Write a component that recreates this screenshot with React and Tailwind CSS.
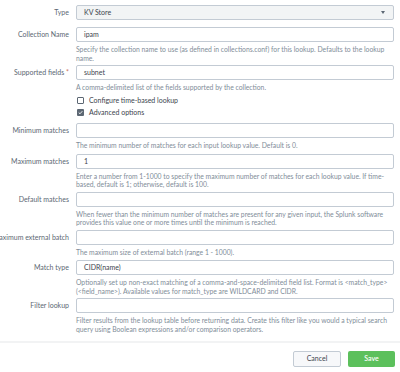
const labelCls = 'w-[69px] shrink-0 text-right whitespace-nowrap text-[7px] leading-[15px] text-[#5c6773]'

function Field({ label, required, value, help, twoLines, select }) {
  const gap = !help ? 'mb-[7px]' : twoLines ? 'mb-[3px]' : 'mb-[4px]'
  return (
    <div className={`flex gap-[7px] ${gap}`}>
      <div className={labelCls} style={{ direction: 'rtl' }}>
        <span style={{ direction: 'ltr', unicodeBidi: 'isolate' }}>
          {label}
          {required && <span className="text-[#c9735f]"> *</span>}
        </span>
      </div>
      <div className="flex-1 min-w-0">
        <div
          className={`h-[15px] rounded-[2px] border border-[#c3cbd4] flex items-center px-[7px] text-[7px] text-[#3c444d] ${
            select ? 'bg-[#f2f4f5]' : 'bg-white'
          }`}
        >
          <span className="flex-1">{value}</span>
          {select && (
            <svg width="4" height="3" viewBox="0 0 4 3" className="mr-[1px]">
              <path d="M0 0 L4 0 L2 3 Z" fill="#5c6773" />
            </svg>
          )}
        </div>
        {help && (
          <div className="mt-[3px] whitespace-nowrap text-[6.8px] leading-[8.5px] text-[#818d99]">{help}</div>
        )}
      </div>
    </div>
  )
}

function Check({ checked, label }) {
  return (
    <div className="flex items-center gap-[5px] ml-[77px] h-[12px] text-[7px] text-[#3c444d]">
      <span
        className={`w-[7px] h-[7px] rounded-[1px] flex items-center justify-center ${
          checked ? 'bg-[#5c6773]' : 'border border-[#5c6773] bg-white'
        }`}
      >
        {checked && (
          <svg width="5" height="5" viewBox="0 0 10 10">
            <path d="M1.5 5.2 L4 7.6 L8.6 2.4" stroke="white" strokeWidth="1.8" fill="none" />
          </svg>
        )}
      </span>
      {label}
    </div>
  )
}

export default function App() {
  return (
    <div className="w-[400px] h-[372px] bg-white overflow-hidden" style={{ fontFamily: 'Lato, "Open Sans", sans-serif' }}>
      <div className="pt-[5px] pr-[6px]">
        <Field label="Type" value="KV Store" select />
        <Field
          label="Collection Name"
          value="ipam"
          twoLines
          help={<>Specify the collection name to use (as defined in collections.conf) for this lookup. Defaults to the lookup<br />name.</>}
        />
        <Field
          label="Supported fields"
          required
          value="subnet"
          help="A comma-delimited list of the fields supported by the collection."
        />
        <div className="-mt-[1px] mb-[4.5px]">
          <Check label="Configure time-based lookup" />
          <Check checked label="Advanced options" />
        </div>
        <Field
          label="Minimum matches"
          value=""
          help="The minimum number of matches for each input lookup value. Default is 0."
        />
        <Field
          label="Maximum matches"
          value="1"
          twoLines
          help={<>Enter a number from 1-1000 to specify the maximum number of matches for each lookup value. If time-<br />based, default is 1; otherwise, default is 100.</>}
        />
        <Field
          label="Default matches"
          value=""
          twoLines
          help={<>When fewer than the minimum number of matches are present for any given input, the Splunk software<br />provides this value one or more times until the minimum is reached.</>}
        />
        <Field
          label="Maximum external batch"
          value=""
          help="The maximum size of external batch (range 1 - 1000)."
        />
        <Field
          label="Match type"
          value="CIDR(name)"
          twoLines
          help={<>Optionally set up non-exact matching of a comma-and-space-delimited field list. Format is &lt;match_type&gt;<br />(&lt;field_name&gt;). Available values for match_type are WILDCARD and CIDR.</>}
        />
        <Field
          label="Filter lookup"
          value=""
          twoLines
          help={<>Filter results from the lookup table before returning data. Create this filter like you would a typical search<br />query using Boolean expressions and/or comparison operators.</>}
        />
      </div>
      <div className="mt-[7.5px] h-[2px] bg-[#f2f3f4]" />
      <div className="flex justify-end gap-[7px] pt-[8px] pr-[5px]">
        <button className="w-[48px] h-[16px] rounded-[2px] border border-[#c3cbd4] bg-[#f7f8fa] text-[7px] text-[#3c444d]">
          Cancel
        </button>
        <button className="w-[47px] h-[16px] rounded-[2px] bg-[#5cc05c] text-[7px] font-semibold text-white">
          Save
        </button>
      </div>
    </div>
  )
}
